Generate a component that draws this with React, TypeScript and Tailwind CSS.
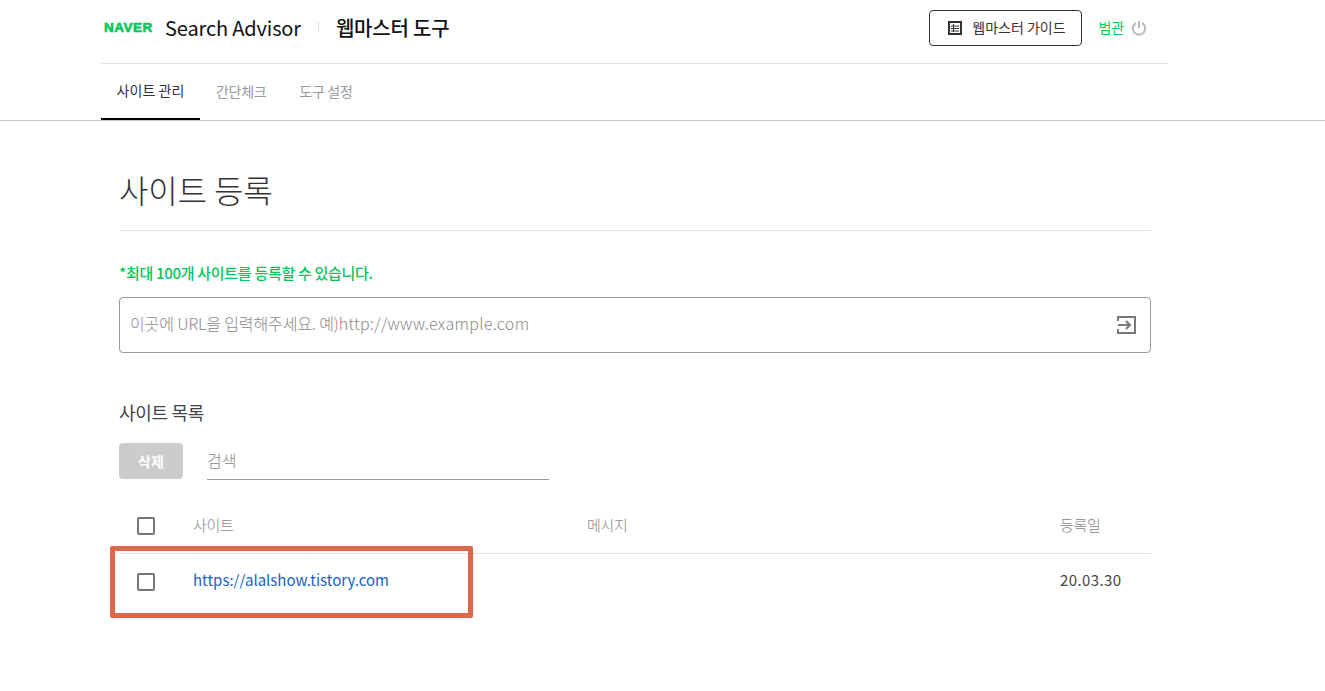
const font = { fontFamily: '"Noto Sans CJK KR", "Noto Sans", sans-serif' };

function Checkbox() {
  return <span className="block w-[18px] h-[18px] border-2 border-[#777] rounded-[2px] bg-white" />;
}

function GuideIcon() {
  return (
    <svg width="14" height="14" viewBox="0 0 14 14" fill="none">
      <rect x="1" y="1" width="12" height="12" stroke="#333" strokeWidth="2" />
      <path d="M3 5h8M3 7.5h8M3 10h8M5.5 3v8" stroke="#333" strokeWidth="1" />
    </svg>
  );
}

function EnterIcon() {
  return (
    <svg width="19" height="18" viewBox="0 0 19 18" fill="none" stroke="#777" strokeWidth="2">
      <path d="M1 5V1h17v16H1v-4" />
      <path d="M1 9h12M9 5l4 4-4 4" />
    </svg>
  );
}

function PowerIcon() {
  return (
    <svg width="16" height="16" viewBox="0 0 16 16" fill="none" stroke="#bbb" strokeWidth="2">
      <path d="M5 3a6.2 6.2 0 1 0 6 0" />
      <path d="M8 1v7" />
    </svg>
  );
}

function Header() {
  return (
    <header className="border-b border-[#c8c8c8] h-[121px]">
      <div className="ml-[101px] w-[1068px]">
        <div className="h-[64px] border-b border-[#e2e2e2] flex items-center pl-[3px] pr-[22px] pb-[8px]">
          <span className="text-[13.5px] leading-none font-black text-[#03c75a] w-[49px] tracking-[0.5px] [-webkit-text-stroke:0.6px_#03c75a]" style={{ fontFamily: '"Liberation Sans", sans-serif' }}>
            NAVER
          </span>
          <span className="ml-[12px] text-[20px] font-normal text-[#111] tracking-[-0.15px]">Search Advisor</span>
          <span className="ml-[17px] w-px h-[11px] bg-[#ddd]" />
          <span className="ml-[17px] text-[20px] font-medium text-[#111] tracking-[-0.2px]">웹마스터 도구</span>
          <div className="ml-auto flex items-center">
            <div className="w-[153px] h-[36px] border border-[#333] rounded-[4px] flex items-center justify-center gap-[10px] pl-[2px] text-[14px] text-[#333]">
              <GuideIcon />
              <span>웹마스터 가이드</span>
            </div>
            <span className="ml-[16px] text-[14px] text-[#03c75a] tracking-[-0.1px]">범관</span>
            <span className="ml-[7px]"><PowerIcon /></span>
          </div>
        </div>
        <nav className="flex h-[56px] text-[14px] tracking-[-0.3px] pb-[2px]">
          <div className="w-[99px] flex items-center justify-center border-b-2 border-black text-[#333] h-[56px] pb-[2px] tracking-[0.1px]">사이트 관리</div>
          <div className="ml-[16px] flex items-center text-[#999]">간단체크</div>
          <div className="ml-[33px] flex items-center text-[#999]">도구 설정</div>
        </nav>
      </div>
    </header>
  );
}

export default function App() {
  return (
    <div className="relative h-[691px] bg-white overflow-hidden" style={font}>
      <Header />
      <main className="ml-[119px] w-[1032px]">
        <h1 className="h-[110px] pt-[45px] border-b border-[#e2e2e2] text-[32px] leading-[46px] font-light text-[#333] tracking-[-0.1px]">사이트 등록</h1>
        <p className="mt-[32px] text-[15px] leading-[20px] font-medium text-[#03c75a] tracking-[-0.3px]">*최대 100개 사이트를 등록할 수 있습니다.</p>
        <div className="mt-[14px] h-[56px] border border-[#999] rounded-[4px] flex items-center pl-[10px] pr-[14px]">
          <span className="text-[16px] leading-[24px] pb-[5px] font-light text-[#888] flex-1">
            <span className="tracking-[-0.12px]">이곳에 URL을 입력해주세요. 예)</span>
            <span className="tracking-[0.32px]">http://www.example.com</span>
          </span>
          <EnterIcon />
        </div>
        <h2 className="mt-[47px] text-[18px] leading-[24px] font-normal text-[#444] tracking-[-0.3px]">사이트 목록</h2>
        <div className="mt-[19px] flex items-start">
          <button className="w-[64px] h-[36px] bg-[#ccc] rounded-[4px] text-white text-[14px] font-bold">삭제</button>
          <div className="ml-[24px] w-[342px] h-[37px] border-b border-[#999] text-[16px] font-light text-[#888] leading-[35px]">검색</div>
        </div>
        <div className="mt-[18px] h-[56px] border-b border-[#e2e2e2] flex items-center text-[15px] text-[#888] font-light">
          <div className="w-[74px] pl-[18px]"><Checkbox /></div>
          <div className="w-[394px] tracking-[-0.3px]">사이트</div>
          <div className="w-[473px] tracking-[-0.3px]">메시지</div>
          <div className="tracking-[-0.3px]">등록일</div>
        </div>
        <div className="h-[56px] flex items-center text-[15px]">
          <div className="w-[74px] pl-[18px]"><Checkbox /></div>
          <div className="w-[867px] text-[#1a5fc8] pb-[3px]">https://alalshow.tistory.com</div>
          <div className="text-[#444] pb-[3px] tracking-[0.4px]">20.03.30</div>
        </div>
      </main>
      <div className="absolute left-[110px] top-[546px] w-[363px] h-[72px] border-[5px] border-[#dc674a] rounded-[2px]" />
    </div>
  );
}
